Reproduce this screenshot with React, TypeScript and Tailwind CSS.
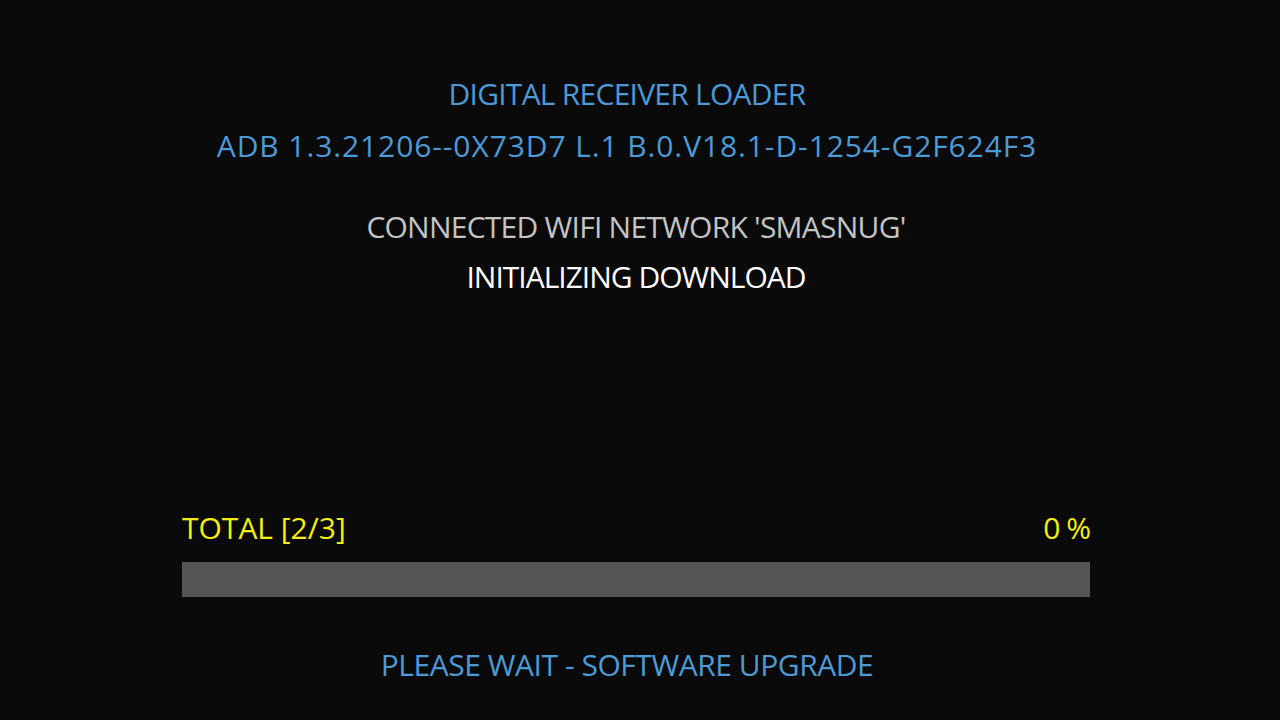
export default function App() {
  return (
    <div
      className="flex h-[720px] w-[1280px] flex-col bg-[#0a0a0a] pl-[182px] pt-[68px] text-[30px] uppercase"
      style={{ fontFamily: '"Open Sans", "DejaVu Sans", sans-serif' }}
    >
      <div className="flex w-[908px] flex-col items-center">
        <p className="mr-[18px] leading-[52px] tracking-[-0.75px] text-[#4d9ad6]">Digital Receiver Loader</p>
        <p className="mr-[18px] leading-[52px] tracking-[0.9px] text-[#4d9ad6]">
          ADB 1.3.21206--0X73D7 L.1 B.0.V18.1-D-1254-G2F624F3
        </p>
        <p className="mt-[30px] leading-[50px] tracking-[-0.75px] text-[#c4c4c4]">Connected WiFi network 'SMASNUG'</p>
        <p className="leading-[50px] tracking-[-1px] text-white">Initializing download</p>

        <div className="mt-[206px] flex w-full items-end justify-between leading-[40px] text-[#f4ee10]">
          <span>Total [2/3]</span>
          <span className="tracking-[-1px]">0 %</span>
        </div>
        <div className="mt-[14px] h-[35px] w-full bg-[#555555]" />

        <p className="mr-[18px] mt-[43px] leading-[50px] tracking-[-0.45px] text-[#4d9ad6]">
          Please wait - software upgrade
        </p>
      </div>
    </div>
  );
}
